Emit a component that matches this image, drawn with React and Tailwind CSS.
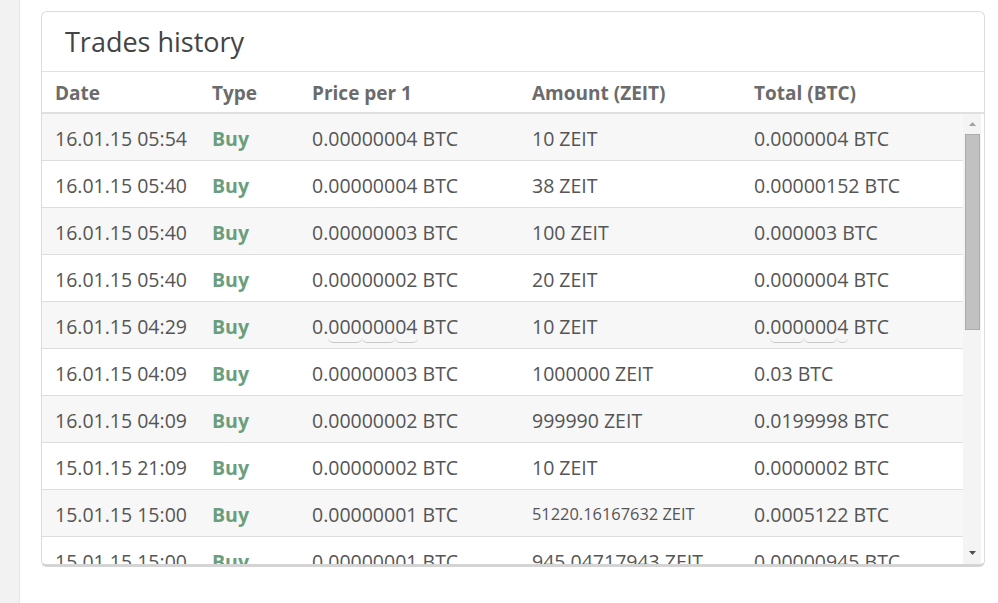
import React from "react";

const rows = [
  { d: "16.01.15 05:54", p: "0.00000004 BTC", a: "10 ZEIT", t: "0.0000004 BTC" },
  { d: "16.01.15 05:40", p: "0.00000004 BTC", a: "38 ZEIT", t: "0.00000152 BTC" },
  { d: "16.01.15 05:40", p: "0.00000003 BTC", a: "100 ZEIT", t: "0.000003 BTC" },
  { d: "16.01.15 05:40", p: "0.00000002 BTC", a: "20 ZEIT", t: "0.0000004 BTC" },
  { d: "16.01.15 04:29", p: "U1", a: "10 ZEIT", t: "U2" },
  { d: "16.01.15 04:09", p: "0.00000003 BTC", a: "1000000 ZEIT", t: "0.03 BTC" },
  { d: "16.01.15 04:09", p: "0.00000002 BTC", a: "999990 ZEIT", t: "0.0199998 BTC" },
  { d: "15.01.15 21:09", p: "0.00000002 BTC", a: "10 ZEIT", t: "0.0000002 BTC" },
  { d: "15.01.15 15:00", p: "0.00000001 BTC", a: "51220.16167632 ZEIT", t: "0.0005122 BTC", small: true },
  { d: "15.01.15 15:00", p: "0.00000001 BTC", a: "945.04717943 ZEIT", t: "0.00000945 BTC" },
];

const U = ({ children }) => (
  <span className="border-b border-[#c8c8c8] rounded-b-[5px] pb-[2px]">{children}</span>
);

function Cell({ v }) {
  if (v === "U1")
    return (
      <span>
        0.<U>000</U><U>000</U><U>04</U> BTC
      </span>
    );
  if (v === "U2")
    return (
      <span>
        0.<U>000</U><U>000</U><U>4</U> BTC
      </span>
    );
  return <span>{v}</span>;
}

export default function App() {
  return (
    <div
      className="flex w-full h-[603px] bg-white overflow-hidden"
      style={{ fontFamily: "'Open Sans', sans-serif" }}
    >
      <div className="w-[20px] shrink-0 bg-[#f2f2f2] border-r border-[#e4e4e4]" />
      <div className="pl-[21px] pt-[11px]">
        <div className="w-[944px] border border-[#dcdcdc] border-b-[3px] border-b-[#d4d4d4] rounded-[6px] bg-white overflow-hidden flex flex-col">
          <div className="h-[60px] border-b border-[#e2e2e2] flex items-center pl-[23px] pt-[2px] text-[27px] text-[#444]">
            Trades history
          </div>
          <div className="h-[42px] flex items-center pl-[13px] pt-[2px] text-[19px] font-bold text-[#6b6b6b] border-b-2 border-[#e0e0e0] shadow-[0_1px_2px_rgba(0,0,0,0.08)]">
            <div className="w-[157px]">Date</div>
            <div className="w-[100px]">Type</div>
            <div className="w-[220px]">Price per 1</div>
            <div className="w-[222px]">Amount (ZEIT)</div>
            <div>Total (BTC)</div>
          </div>
          <div className="h-[450px] flex overflow-hidden">
            <div className="w-[921px] overflow-hidden">
              {rows.map((r, i) => (
                <div
                  key={i}
                  className={`h-[47px] flex items-center pl-[13px] pt-[3px] text-[19.5px] text-[#555] border-b border-[#dedede] whitespace-nowrap ${
                    i % 2 === 0 ? "bg-[#f7f7f7]" : "bg-white"
                  }`}
                >
                  <div className="w-[157px]">{r.d}</div>
                  <div className="w-[100px] font-bold text-[#6a9e7c]">Buy</div>
                  <div className="w-[220px]">
                    <Cell v={r.p} />
                  </div>
                  <div className={`w-[222px] ${r.small ? "text-[16.4px]" : ""}`}>{r.a}</div>
                  <div>
                    <Cell v={r.t} />
                  </div>
                </div>
              ))}
            </div>
            <div className="w-[18px] bg-[#f4f4f4] flex flex-col items-center">
              <div className="h-[20px] w-full flex items-center justify-center">
                <svg width="7" height="4" viewBox="0 0 7 4">
                  <path d="M0 4 L3.5 0 L7 4 Z" fill="#a3a3a3" />
                </svg>
              </div>
              <div className="w-[15px] h-[196px] bg-[#c1c1c1] border border-[#ababab]" />
              <div className="flex-1" />
              <div className="h-[22px] w-full flex items-center justify-center">
                <svg width="7" height="4" viewBox="0 0 7 4">
                  <path d="M0 0 L7 0 L3.5 4 Z" fill="#505050" />
                </svg>
              </div>
            </div>
            <div className="flex-1 bg-white" />
          </div>
        </div>
      </div>
    </div>
  );
}
